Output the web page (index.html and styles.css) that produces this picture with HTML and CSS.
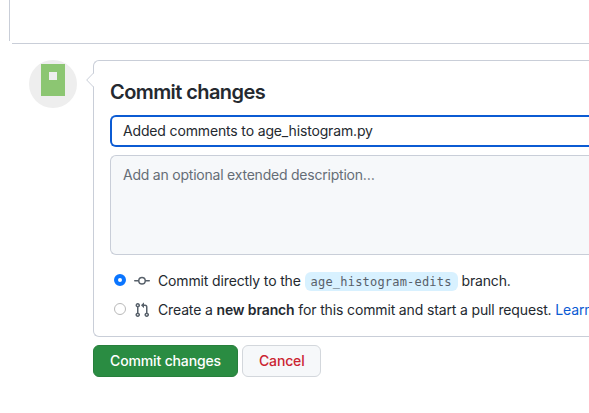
FILE: index.html
```html
<!DOCTYPE html>
<html lang="en">
<head>
<meta charset="utf-8">
<title>Commit changes</title>
<link rel="stylesheet" href="styles.css">
</head>
<body>
<div class="editor"><div class="editor-side"></div><div class="editor-bottom"></div></div>
<form class="commit">
  <svg class="avatar" viewBox="0 0 48 48"><circle cx="24" cy="24" r="24" fill="#eee"/><path fill="#8cc672" fill-rule="evenodd" d="M12 4h24v32H12zM20 12v8h8v-8z"/></svg>
  <div class="main">
    <div class="box">
      <svg class="caret" viewBox="0 0 8 16"><path d="M8 1v14L.7 8z" fill="#fff"/><path d="M7.5 1L.7 8l6.8 7" fill="none" stroke="#c9ced8"/></svg>
      <h2>Commit changes</h2>
      <div class="field summary">Added comments to age_histogram.py</div>
      <div class="field description">Add an optional extended description…</div>
      <div class="option first">
        <span class="radio checked"></span>
        <svg class="icon" viewBox="0 0 16 16"><path fill-rule="evenodd" d="M10.5 7.75a2.5 2.5 0 11-5 0 2.5 2.5 0 015 0zm1.43.75a4.002 4.002 0 01-7.86 0H.75a.75.75 0 110-1.5h3.32a4.001 4.001 0 017.86 0h3.32a.75.75 0 110 1.5h-3.32z"/></svg>
        <span class="label">Commit directly to the <code>age_histogram-edits</code> branch.</span>
      </div>
      <div class="option">
        <span class="radio"></span>
        <svg class="icon" viewBox="0 0 16 16"><path fill-rule="evenodd" d="M7.177 3.073L9.573.677A.25.25 0 0110 .854v4.792a.25.25 0 01-.427.177L7.177 3.427a.25.25 0 010-.354zM3.75 2.5a.75.75 0 100 1.5.75.75 0 000-1.5zm-2.25.75a2.25 2.25 0 113 2.122v5.256a2.251 2.251 0 11-1.5 0V5.372A2.25 2.25 0 011.5 3.25zM11 2.5h-1V4h1a1 1 0 011 1v5.628a2.251 2.251 0 101.5 0V5A2.5 2.5 0 0011 2.5zm1 10.25a.75.75 0 111.5 0 .75.75 0 01-1.5 0zM3.75 12a.75.75 0 100 1.5.75.75 0 000-1.5z"/></svg>
        <span class="label">Create a <b>new branch</b> for this commit and start a pull request. <a>Learn</a></span>
      </div>
    </div>
    <div class="actions">
      <button type="button" class="primary">Commit changes</button>
      <button type="button" class="danger">Cancel</button>
    </div>
  </div>
</form>
</body>
</html>
```

FILE: styles.css
```css
* { box-sizing: border-box; }
body {
  margin: 0;
  height: 413px;
  overflow: hidden;
  background: #fff;
  color: #24292f;
  font: 14px/20px Inter, "Liberation Sans", sans-serif;
  white-space: nowrap;
}
.editor { height: 44px; margin-left: 9px; }
.editor-side { height: 41px; border-left: 1px solid #c9ced8; }
.editor-bottom { height: 3px; margin-left: 3px; border-bottom: 1px solid #c9ced8; }
.commit { display: flex; align-items: flex-start; gap: 16px; margin: 16px 0 0 29px; }
.avatar { width: 48px; height: 48px; flex: none; }
.main { flex: 1; min-width: 0; }
.box {
  position: relative;
  height: 277px;
  padding: 16px 0 16px 16px;
  border: 1px solid #c9ced8;
  border-right: 0;
  border-radius: 6px 0 0 6px;
}
.caret { position: absolute; left: -8px; top: 11px; width: 8px; height: 16px; }
h2 { margin: 0 0 8px; font-size: 20px; line-height: 30px; font-weight: 600; letter-spacing: -.58px; }
.field { border-radius: 6px 0 0 6px; }
.summary { height: 32px; padding: 4px 11px; border: 2px solid #0b5bd3; border-right: 0; letter-spacing: -.15px; }
.description {
  height: 100px;
  margin-top: 8px;
  padding: 9px 12px;
  border: 1px solid #c9ced8;
  border-right: 0;
  background: #f6f8fa;
  color: #656d76;
  letter-spacing: -.22px;
}
.option { display: flex; align-items: center; height: 20px; margin-top: 9px; }
.first { margin-top: 16px; }
.radio { width: 12px; height: 12px; margin: 0 8px 2px 4px; border: 1px solid #b9b9b9; border-radius: 50%; flex: none; }
.checked { border: 4px solid #0a75ff; }
.icon { width: 16px; height: 16px; margin-right: 8px; fill: #57606a; flex: none; }
.first .icon { margin-bottom: 1px; }
.label { letter-spacing: -.14px; }
code {
  padding: 3px 6px 2px;
  border-radius: 6px;
  background: #d8f1ff;
  color: #57606a;
  font: 12px/19px "DejaVu Sans Mono", monospace;
  letter-spacing: .2px;
}
b { font-weight: 600; }
a { color: #0b5bd3; }
.actions { display: flex; gap: 4px; margin-top: 8px; }
button {
  height: 32px;
  padding: 0 16px;
  border: 1px solid #d3d7dc;
  border-radius: 6px;
  font: 500 14px/20px Inter, "Liberation Sans", sans-serif;
  letter-spacing: -.15px;
}
.primary { width: 145px; background: #2a8c42; border-color: #277f3c; color: #fff; }
.danger { width: 79px; background: #f6f8fa; color: #cb2431; }
```
